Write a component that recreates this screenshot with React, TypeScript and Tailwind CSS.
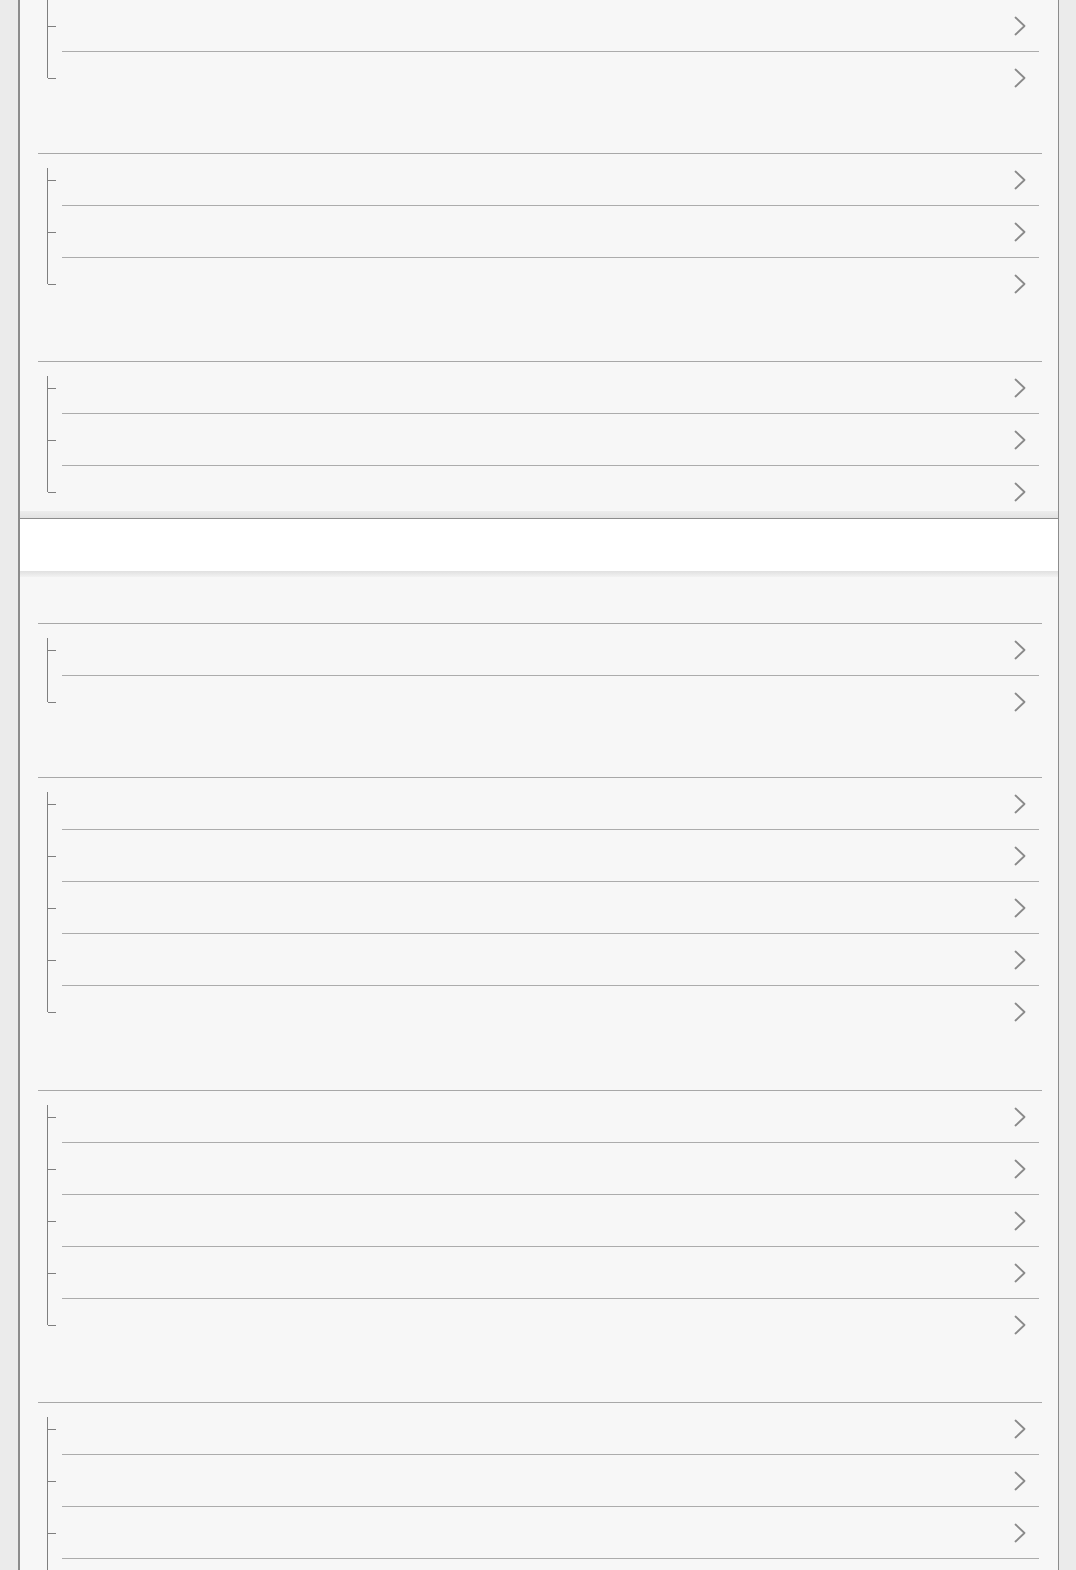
type Group = {
  gap: number;
  rows: number;
  cutTop?: boolean;
};

const topGroups: Group[] = [
  { gap: 0, rows: 2, cutTop: true },
  { gap: 49, rows: 3 },
  { gap: 51, rows: 3 },
];

const bottomGroups: Group[] = [
  { gap: 52, rows: 2 },
  { gap: 49, rows: 5 },
  { gap: 52, rows: 5 },
  { gap: 51, rows: 5 },
];

const gapClass: Record<number, string> = {
  0: "pt-0",
  49: "pt-[49px]",
  51: "pt-[51px]",
  52: "pt-[52px]",
};

function Chevron() {
  return (
    <svg width="12" height="20" viewBox="0 0 12 20" fill="none">
      <path
        d="M1.5 1.5 L10.5 10 L1.5 18.5"
        stroke="#8a8a8a"
        strokeWidth="1.8"
        strokeLinecap="round"
        strokeLinejoin="round"
      />
    </svg>
  );
}

function Row({ first, last, cutTop }: { first: boolean; last: boolean; cutTop?: boolean }) {
  const lineTop = first && !cutTop ? "top-[14px]" : "top-0";
  const lineBottom = last ? "bottom-[26px]" : "bottom-0";

  return (
    <div className="flex pl-[27px]">
      {/* tree gutter */}
      <div className="relative w-[15px] shrink-0">
        <div className={`absolute left-0 w-px bg-[#7f7f7f] ${lineTop} ${lineBottom}`} />
        <div className="absolute left-px top-[26px] h-px w-[8px] bg-[#7f7f7f]" />
      </div>
      <div
        className={`flex h-[52px] flex-1 items-center justify-end mr-[19px] pr-[13px] ${
          last ? "" : "border-b border-[#acacac]"
        }`}
      >
        <Chevron />
      </div>
    </div>
  );
}

function GroupBlock({ group }: { group: Group }) {
  return (
    <div className={gapClass[group.gap]}>
      {!group.cutTop && <div className="ml-[18px] mr-[16px] h-px bg-[#a8a8a8]" />}
      {Array.from({ length: group.rows }).map((_, i) => (
        <Row key={i} first={i === 0} last={i === group.rows - 1} cutTop={group.cutTop} />
      ))}
    </div>
  );
}

export default function App() {
  return (
    <div className="h-[1570px] overflow-hidden bg-[#ebebeb]">
      <div className="ml-[18px] w-[1041px] min-h-full border-l-2 border-r border-[#8c8c8c] bg-[#f7f7f7]">
        <div>
          {topGroups.map((g, i) => (
            <GroupBlock key={i} group={g} />
          ))}
        </div>

        {/* sticky section bar */}
        <div className="relative h-[53px] border-t border-[#8c8c8c] bg-white">
          <div className="absolute bottom-full left-0 right-0 mb-px h-[7px] bg-linear-to-b from-[#ededed] to-[#e2e2e2]" />
          <div className="absolute top-full left-0 right-0 h-[6px] bg-linear-to-b from-[#e0e0e0] to-[#f2f2f2]" />
        </div>

        <div>
          {bottomGroups.map((g, i) => (
            <GroupBlock key={i} group={g} />
          ))}
        </div>
      </div>
    </div>
  );
}
